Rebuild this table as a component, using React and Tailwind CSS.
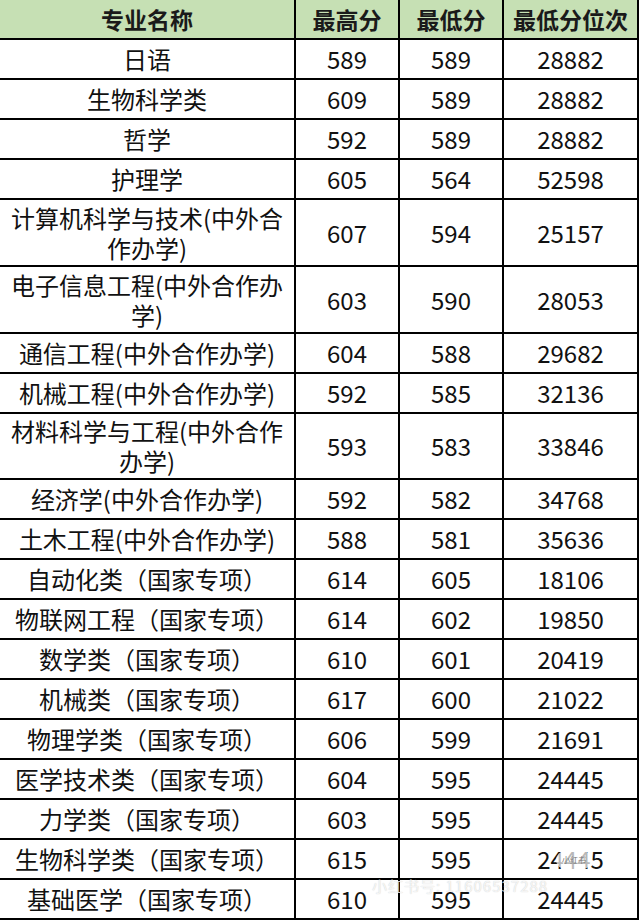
import React from "react";

const rows = [
  ["日语", "589", "589", "28882", 1],
  ["生物科学类", "609", "589", "28882", 1],
  ["哲学", "592", "589", "28882", 1],
  ["护理学", "605", "564", "52598", 1],
  ["计算机科学与技术(中外合作办学)", "607", "594", "25157", 2],
  ["电子信息工程(中外合作办学)", "603", "590", "28053", 2],
  ["通信工程(中外合作办学)", "604", "588", "29682", 1],
  ["机械工程(中外合作办学)", "592", "585", "32136", 1],
  ["材料科学与工程(中外合作办学)", "593", "583", "33846", 3],
  ["经济学(中外合作办学)", "592", "582", "34768", 1],
  ["土木工程(中外合作办学)", "588", "581", "35636", 1],
  ["自动化类（国家专项）", "614", "605", "18106", 1],
  ["物联网工程（国家专项）", "614", "602", "19850", 1],
  ["数学类（国家专项）", "610", "601", "20419", 1],
  ["机械类（国家专项）", "617", "600", "21022", 1],
  ["物理学类（国家专项）", "606", "599", "21691", 1],
  ["医学技术类（国家专项）", "604", "595", "24445", 1],
  ["力学类（国家专项）", "603", "595", "24445", 1],
  ["生物科学类（国家专项）", "615", "595", "24445", 1],
  ["基础医学（国家专项）", "610", "595", "24445", 1],
];

const font = { fontFamily: '"Noto Sans CJK SC", "Noto Sans", sans-serif' };

function rowHeight(k) {
  if (k === 2) return "h-[67px]";
  if (k === 3) return "h-[66px]";
  return "h-[40px]";
}

export default function App() {
  return (
    <div className="relative w-[639px] h-[920px] bg-white text-[#111]" style={font}>
      <div className="flex h-[40px] bg-[#c6e0b4] border-b-2 border-black font-bold text-[23px] text-[#1a1a1a]">
        <div className="w-[296px] border-r-2 border-black flex items-center justify-center">专业名称</div>
        <div className="w-[104px] border-r-2 border-black flex items-center justify-center">最高分</div>
        <div className="w-[104px] border-r-2 border-black flex items-center justify-center">最低分</div>
        <div className="w-[135px] border-r-2 border-black flex items-center justify-center">最低分位次</div>
      </div>
      {rows.map(([name, hi, lo, rank, k], i) => (
        <div key={i} className={`flex ${rowHeight(k)} border-b-2 border-black text-[24px]`}>
          <div className="w-[296px] border-r-2 border-black flex items-center justify-center text-center leading-[30px] px-[4px]">
            <span>{name}</span>
          </div>
          <div className="w-[104px] border-r-2 border-black flex items-center justify-center">{hi}</div>
          <div className="w-[104px] border-r-2 border-black flex items-center justify-center">{lo}</div>
          <div className="w-[135px] border-r-2 border-black flex items-center justify-center">{rank}</div>
        </div>
      ))}
      <div className="absolute left-[556px] top-[851px] w-[36px] h-[18px] rounded-full bg-white/70 flex items-center justify-center text-[8px] text-[#777]">
        小红书
      </div>
      <div className="absolute left-[372px] top-[875px] text-[15px] text-white/80 tracking-[1px]" style={{ textShadow: "0 0 1px rgba(0,0,0,0.25)" }}>
        小红书号: 11606537288
      </div>
    </div>
  );
}
